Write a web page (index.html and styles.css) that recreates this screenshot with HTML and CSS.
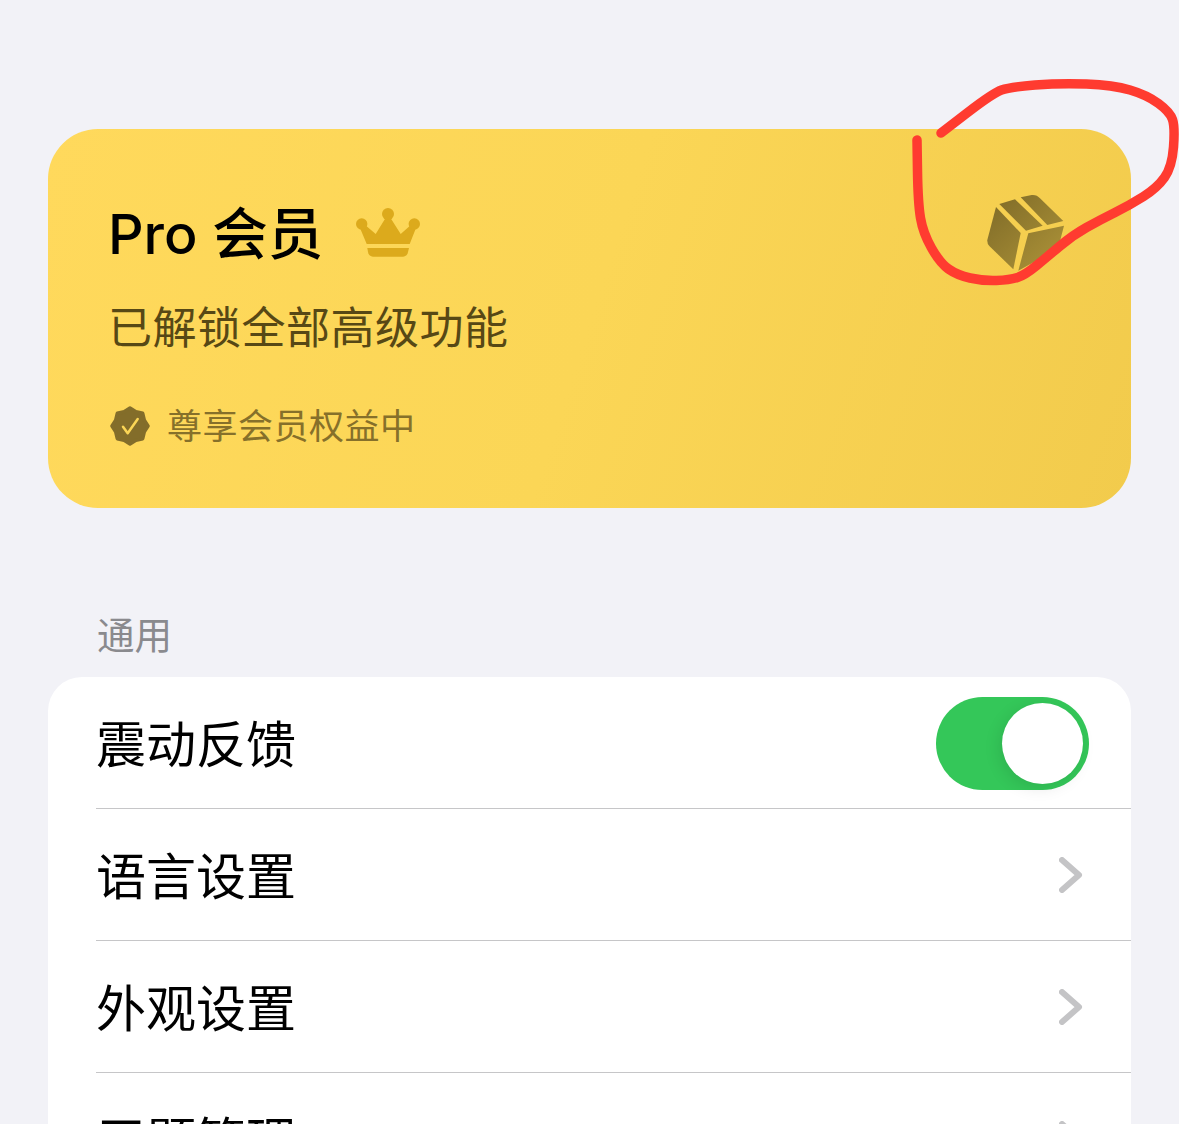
FILE: index.html
```html
<!DOCTYPE html>
<html lang="zh-CN">
<head>
<meta charset="utf-8">
<title>设置</title>
<link rel="stylesheet" href="styles.css">
</head>
<body>
<main class="page">
  <section class="pro-card">
    <div class="pro-title-row">
      <h1 class="pro-title">Pro 会员</h1>
      <svg class="crown" viewBox="0 0 64 50" aria-hidden="true">
        <path class="crown-fill" d="M32 6L44.700 26 56 16l4 4-6.300 16H10.700L4 20l4-4 11.700 10z"/>
        <circle class="crown-fill" cx="32" cy="6" r="6"/>
        <circle class="crown-fill" cx="5.700" cy="16" r="5.700"/>
        <circle class="crown-fill" cx="58.300" cy="16" r="5.700"/>
        <path class="crown-fill" d="M11.300 40H53l-1 4a5 5 0 0 1-5 4.700H17a5 5 0 0 1-5-4.700z"/>
      </svg>
    </div>
    <p class="pro-sub">已解锁全部高级功能</p>
    <div class="pro-status">
      <svg class="badge" viewBox="0 0 40 40" aria-hidden="true">
        <path class="badge-fill" d="M20 2l5.900 3.700 6.800 1.600 1.600 6.800L38 20l-3.700 5.900-1.600 6.800-6.800 1.600L20 38l-5.900-3.700-6.800-1.600-1.600-6.800L2 20l3.700-5.900 1.600-6.800 6.800-1.600z"/>
        <path class="badge-check" d="M13 20.700l4.700 6.600 10-14.300"/>
      </svg>
      <span class="pro-status-text">尊享会员权益中</span>
    </div>
    <svg class="box" viewBox="0 0 78 78" aria-hidden="true">
      <defs>
        <linearGradient id="boxGrad" gradientUnits="userSpaceOnUse" x1="5" y1="5" x2="70" y2="75">
          <stop offset="0" stop-color="#7f6b28"/>
          <stop offset="1" stop-color="#ac9238"/>
        </linearGradient>
      </defs>
      <path class="box-face" d="M10 14l24.700 26-7.400 36.300L3.300 53q-2.300-2.500-2-6z"/>
      <path class="box-face" d="M42.300 40.300L78 32.700 73 52q-1 4-5 6L32.300 77.700z"/>
      <path class="box-face" d="M13.300 11L29 6.300l27.700 26.400L40 37.700z"/>
      <path class="box-face" d="M34.700 4.300l11-2.300q5-.6 8.300 3.300L77.300 28l-16 4z"/>
    </svg>
  </section>

  <h2 class="section-label">通用</h2>
  <section class="list">
    <div class="row">
      <span class="row-label">震动反馈</span>
      <span class="switch"><span class="knob"></span></span>
    </div>
    <div class="row">
      <span class="row-label">语言设置</span>
      <svg class="chevron" viewBox="0 0 24 36" aria-hidden="true"><path d="M3 3l17 15L3 33"/></svg>
    </div>
    <div class="row">
      <span class="row-label">外观设置</span>
      <svg class="chevron" viewBox="0 0 24 36" aria-hidden="true"><path d="M3 3l17 15L3 33"/></svg>
    </div>
    <div class="row">
      <span class="row-label">习题管理</span>
      <svg class="chevron" viewBox="0 0 24 36" aria-hidden="true"><path d="M3 3l17 15L3 33"/></svg>
    </div>
  </section>
</main>
<svg class="scribble" viewBox="0 0 1179 1124" aria-hidden="true">
  <path d="M941 133L967 113Q993 93 1001.500 90Q1010 87 1035 85Q1060 83 1086.500 84Q1113 85 1130 90Q1147 95 1158.500 103.500Q1170 112 1172.500 119.500Q1175 127 1173.500 147Q1172 167 1164.500 177.500Q1157 188 1143.500 196.500Q1130 205 1115 212.500Q1100 220 1086.500 227.500Q1073 235 1060 246Q1047 257 1036 266Q1025 275 1017.500 277.500Q1010 280 996.500 280.500Q983 281 970 278Q957 275 948.500 269Q940 263 931.500 248Q923 233 920.500 218Q918 203 917.500 171.500L917 140"/>
</svg>
</body>
</html>
```
FILE: styles.css
```css
* { box-sizing: border-box; }
html, body {
  margin: 0;
  height: 1124px;
  overflow: hidden;
  background: #f2f2f7;
}
body {
  position: relative;
  font-family: "Inter", "Noto Sans CJK SC", sans-serif;
  color: #000;
}
.page {
  display: flex;
  flex-direction: column;
  padding: 129px 48px 0;
}
.pro-card {
  position: relative;
  height: 379px;
  padding: 69px 60px 0;
  border-radius: 50px;
  background: linear-gradient(108deg, #ffd95c 0%, #fbd656 50%, #f2cb4c 100%);
}
.pro-title-row {
  display: flex;
  align-items: center;
  gap: 33px;
  height: 72px;
}
.pro-title {
  margin: 0;
  font-size: 55.500px;
  line-height: 72px;
  font-weight: 500;
  white-space: nowrap;
}
.crown { width: 64px; height: 50px; margin-top: -2px; }
.crown-fill { fill: #dcaa1c; }
.pro-sub {
  margin: 28px 0 0;
  font-size: 44px;
  line-height: 60px;
  letter-spacing: 0.5px;
  color: #574815;
}
.pro-status {
  display: flex;
  align-items: center;
  gap: 17px;
  margin-top: 44px;
  height: 48px;
  margin-left: 2px;
}
.badge { width: 40px; height: 40px; }
.badge-fill { fill: #836d2a; stroke: #836d2a; stroke-width: 3.500; stroke-linejoin: round; }
.badge-check { fill: none; stroke: #fbd656; stroke-width: 2.500; stroke-linecap: round; stroke-linejoin: round; }
.pro-status-text {
  font-size: 35px;
  line-height: 48px;
  letter-spacing: 0.5px;
  color: #86702a;
}
.box {
  position: absolute;
  top: 64px;
  right: 67px;
  width: 78px;
  height: 78px;
}
.box-face { fill: url(#boxGrad); }
.section-label {
  margin: 104px 0 0 49px;
  font-size: 37.500px;
  line-height: 48px;
  font-weight: 400;
  color: #8a8a8e;
}
.list {
  margin-top: 17px;
  background: #fff;
  border-radius: 34px 34px 0 0;
}
.row {
  display: flex;
  align-items: center;
  justify-content: space-between;
  height: 132px;
  margin-left: 48px;
  padding-right: 48px;
  border-bottom: 1px solid #c6c6c8;
}
.row-label {
  padding-top: 4px;
  font-size: 50px;
  line-height: 68px;
}
.switch {
  display: flex;
  justify-content: flex-end;
  align-items: center;
  width: 153px;
  height: 93px;
  margin: 2px -6px 0 0;
  padding-right: 6px;
  border-radius: 47px;
  background: #34c759;
}
.knob {
  width: 81px;
  height: 81px;
  border-radius: 50%;
  background: #fff;
  box-shadow: -3px 4px 16px rgba(0, 0, 0, .1);
}
.chevron { width: 24px; height: 36px; }
.chevron path {
  fill: none;
  stroke: #c4c4c6;
  stroke-width: 6;
  stroke-linecap: round;
  stroke-linejoin: round;
}
.scribble {
  position: absolute;
  inset: 0;
  width: 1179px;
  height: 1124px;
  pointer-events: none;
}
.scribble path {
  fill: none;
  stroke: #ff3b30;
  stroke-width: 9.500;
  stroke-linecap: round;
  stroke-linejoin: round;
}
```
